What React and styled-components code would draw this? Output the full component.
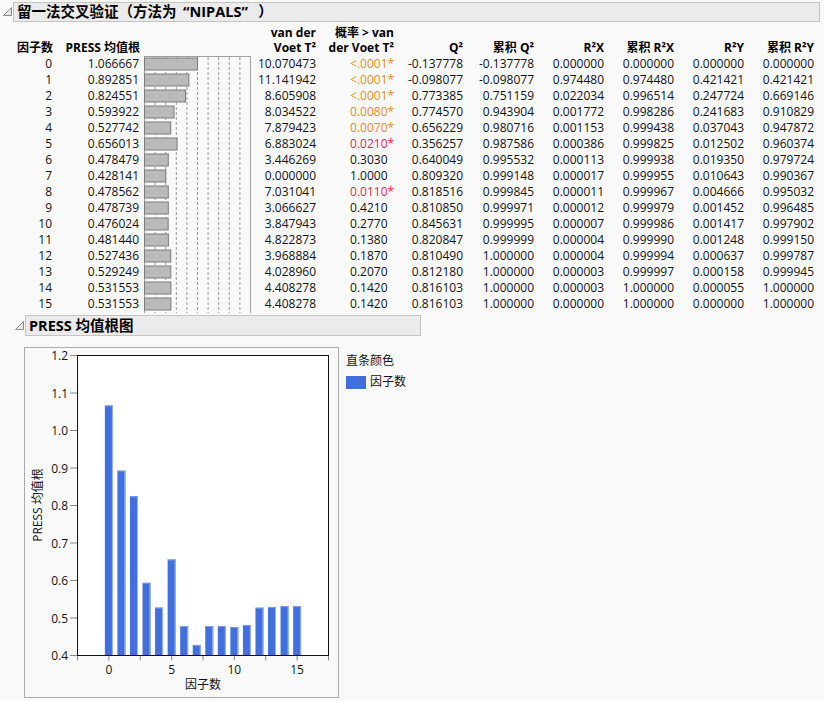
import React from "react";
import styled, { createGlobalStyle } from "styled-components";

const GlobalStyle = createGlobalStyle`
  body {
    margin: 0;
    background: #f9f9f9;
    font-family: "Open Sans", "Noto Sans CJK SC", sans-serif;
    color: #111;
    overflow: hidden;
  }
`;

const rows = [
  [0, 1.066667, "10.070473", "<.0001", "o", "-0.137778", "-0.137778", "0.000000", "0.000000", "0.000000", "0.000000"],
  [1, 0.892851, "11.141942", "<.0001", "o", "-0.098077", "-0.098077", "0.974480", "0.974480", "0.421421", "0.421421"],
  [2, 0.824551, "8.605908", "<.0001", "o", "0.773385", "0.751159", "0.022034", "0.996514", "0.247724", "0.669146"],
  [3, 0.593922, "8.034522", "0.0080", "o", "0.774570", "0.943904", "0.001772", "0.998286", "0.241683", "0.910829"],
  [4, 0.527742, "7.879423", "0.0070", "o", "0.656229", "0.980716", "0.001153", "0.999438", "0.037043", "0.947872"],
  [5, 0.656013, "6.883024", "0.0210", "r", "0.356257", "0.987586", "0.000386", "0.999825", "0.012502", "0.960374"],
  [6, 0.478479, "3.446269", "0.3030", "", "0.640049", "0.995532", "0.000113", "0.999938", "0.019350", "0.979724"],
  [7, 0.428141, "0.000000", "1.0000", "", "0.809320", "0.999148", "0.000017", "0.999955", "0.010643", "0.990367"],
  [8, 0.478562, "7.031041", "0.0110", "r", "0.818516", "0.999845", "0.000011", "0.999967", "0.004666", "0.995032"],
  [9, 0.478739, "3.066627", "0.4210", "", "0.810850", "0.999971", "0.000012", "0.999979", "0.001452", "0.996485"],
  [10, 0.476024, "3.847943", "0.2770", "", "0.845631", "0.999995", "0.000007", "0.999986", "0.001417", "0.997902"],
  [11, 0.48144, "4.822873", "0.1380", "", "0.820847", "0.999999", "0.000004", "0.999990", "0.001248", "0.999150"],
  [12, 0.527436, "3.968884", "0.1870", "", "0.810490", "1.000000", "0.000004", "0.999994", "0.000637", "0.999787"],
  [13, 0.529249, "4.028960", "0.2070", "", "0.812180", "1.000000", "0.000003", "0.999997", "0.000158", "0.999945"],
  [14, 0.531553, "4.408278", "0.1420", "", "0.816103", "1.000000", "0.000003", "1.000000", "0.000055", "1.000000"],
  [15, 0.531553, "4.408278", "0.1420", "", "0.816103", "1.000000", "0.000000", "1.000000", "0.000000", "1.000000"],
];

const pColors = { o: "#f08a1a", r: "#ec1f48", "": "#111" };

const SectionHeader = styled.div`
  display: flex;
  align-items: center;
  gap: 1px;
  padding-left: ${p => p.$indent}px;
  margin-top: ${p => p.$top}px;
`;

const TitleBar = styled.div`
  box-sizing: border-box;
  width: ${p => p.$width}px;
  height: ${p => p.$height}px;
  border: 1px solid #c3c3c3;
  background: #ebebeb;
  padding-left: 3px;
  font-size: 14.5px;
  font-weight: bold;
  line-height: ${p => p.$height - 2}px;
  color: #000;
  white-space: nowrap;
`;

const Quote = styled.span`
  display: inline-block;
  width: 13px;
  text-align: ${p => p.$side};
`;

const Disclosure = ({ left }) => (
  <svg width={left + 9} height="10" style={{ flexShrink: 0 }}>
    <path d={`M${left + 8.5} 0.5 L${left + 8.5} 8.5 L${left + 0.5} 8.5 Z`} fill="#e6e6e6" stroke="#8a8a8a" />
  </svg>
);

const Table = styled.div`
  display: grid;
  grid-template-columns: 53px 87px 110px 66px 78px 69px 71px 70px 70px 70px 70px;
  grid-template-rows: 32px repeat(16, 16px);
  margin-top: 2px;
  font-size: 12px;
`;

const HeadCell = styled.div`
  align-self: end;
  text-align: right;
  font-weight: bold;
  line-height: 15px;
  padding-bottom: 1px;
  white-space: pre-line;
  color: #000;
`;

const Cell = styled.div`
  text-align: right;
  line-height: 16px;
  white-space: nowrap;
  padding-right: ${p => p.$pr || 0}px;
  color: ${p => p.$color || "#111"};
`;

const Star = styled.span`
  display: inline-block;
  width: 6.5px;
  text-align: left;
`;

const MiniWrap = styled.div`
  grid-column: 3;
  grid-row: 2 / span 16;
  align-self: start;
  margin-left: 4px;
  height: 256px;
`;

const MiniChart = () => {
  const step = 10.6;
  return (
    <svg width="107" height="257" style={{ display: "block" }}>
      {Array.from({ length: 9 }, (_, k) => (
        <line key={k} x1={0.5 + step * (k + 1)} x2={0.5 + step * (k + 1)} y1="1" y2="257" stroke="#9a9a9a" strokeDasharray="3 2" />
      ))}
      <line x1="0" x2="107" y1="0.5" y2="0.5" stroke="#a0a0a0" />
      <line x1="106.5" x2="106.5" y1="0" y2="257" stroke="#a0a0a0" />
      <line x1="0.5" x2="0.5" y1="0" y2="257" stroke="#a0a0a0" />
      {rows.map((r, i) => (
        <rect key={i} x="0.5" y={2 + i * 16} width={r[1] * 49.7} height="12" fill="#bababa" stroke="#7c7c7c" />
      ))}
    </svg>
  );
};

const ChartRow = styled.div`
  display: flex;
  align-items: flex-start;
  gap: 7px;
  padding-left: 24px;
  margin-top: 11px;
`;

const ChartFrame = styled.div`
  box-sizing: border-box;
  width: 315px;
  height: 351px;
  border: 1px solid #ababab;
`;

const Legend = styled.div`
  padding-top: 6px;
  font-size: 12px;
  display: flex;
  flex-direction: column;
  gap: 5px;
`;

const LegendTitle = styled.div`
  line-height: 16px;
`;

const LegendItem = styled.div`
  display: flex;
  align-items: center;
  gap: 4px;
  line-height: 16px;
`;

const Swatch = styled.span`
  width: 20px;
  height: 13px;
  background: #4170dd;
`;

const BarChart = () => {
  const left = 52.5, top = 7.5, w = 251, h = 300;
  const ux = w / 20;
  const xs = v => left + (v + 2.5) * ux;
  const ys = v => top + ((1.2 - v) / 0.8) * h;
  const yTicks = [0.4, 0.5, 0.6, 0.7, 0.8, 0.9, 1.0, 1.1, 1.2];
  const xTicks = Array.from({ length: 9 }, (_, k) => -2.5 + k * 2.5);
  return (
    <svg width="313" height="349" style={{ display: "block", overflow: "visible" }} fontFamily='"Open Sans", "Noto Sans CJK SC", sans-serif' fontSize="12">
      <rect x={left} y={top} width={w} height={h} fill="#fff" />
      {yTicks.map(v => (
        <g key={v}>
          <line x1="45" x2={left} y1={ys(v)} y2={ys(v)} stroke="#8a8a8a" />
          <text x="43" y={ys(v) + 4.5} textAnchor="end" fill="#111">
            {v.toFixed(1)}
          </text>
        </g>
      ))}
      {xTicks.map(v => (
        <line key={v} x1={xs(v)} x2={xs(v)} y1={top + h} y2={top + h + 5} stroke="#8a8a8a" />
      ))}
      {[0, 5, 10, 15].map(v => (
        <text key={v} x={xs(v)} y="325.5" textAnchor="middle" fill="#111">
          {v}
        </text>
      ))}
      {rows.map((r, i) => {
        const cx = xs(i);
        const y = ys(r[1]);
        return (
          <g key={i}>
            <rect x={cx - 4} y={y} width="8" height={top + h - y} fill="#4170dd" />
            <line x1={cx + 3.5} x2={cx + 3.5} y1={y} y2={top + h} stroke="#9fb5ee" />
            <line x1={cx - 4} x2={cx + 4} y1={y + 0.5} y2={y + 0.5} stroke="#7d9be6" />
          </g>
        );
      })}
      <rect x={left} y={top} width={w} height={h} fill="none" stroke="#111" />
      <text x={left + w / 2} y="340.5" textAnchor="middle" fill="#111">
        因子数
      </text>
      <text transform="translate(16.5 157) rotate(-90)" textAnchor="middle" fill="#111">
        PRESS 均值根
      </text>
    </svg>
  );
};

const headers = [
  "因子数",
  "PRESS 均值根",
  "",
  "van der\nVoet T²",
  "概率 > van\nder Voet T²",
  "Q²",
  "累积 Q²",
  "R²X",
  "累积 R²X",
  "R²Y",
  "累积 R²Y",
];

export default function App() {
  return (
    <>
      <GlobalStyle />
      <SectionHeader $indent={0} $top={2}>
        <Disclosure left={3} />
        <TitleBar $width={807} $height={20}>
          留一法交叉验证（方法为<Quote $side="right">“</Quote>NIPALS<Quote $side="left">”</Quote> ）
        </TitleBar>
      </SectionHeader>
      <Table>
        {headers.map((t, i) => (
          <HeadCell key={"h" + i}>{t}</HeadCell>
        ))}
        <MiniWrap>
          <MiniChart />
        </MiniWrap>
        {rows.map(r => (
          <React.Fragment key={r[0]}>
            <Cell $pr={1}>{r[0]}</Cell>
            <Cell $pr={1}>{r[1].toFixed(6)}</Cell>
            <Cell>{r[2]}</Cell>
            <Cell $color={pColors[r[4]]}>
              {r[3]}
              <Star>{r[4] ? "*" : ""}</Star>
            </Cell>
            {r.slice(5).map((v, j) => (
              <Cell key={j}>{v}</Cell>
            ))}
          </React.Fragment>
        ))}
      </Table>
      <SectionHeader $indent={15} $top={3}>
        <Disclosure left={0} />
        <TitleBar $width={396} $height={21}>PRESS 均值根图</TitleBar>
      </SectionHeader>
      <ChartRow>
        <ChartFrame>
          <BarChart />
        </ChartFrame>
        <Legend>
          <LegendTitle>直条颜色</LegendTitle>
          <LegendItem>
            <Swatch />
            因子数
          </LegendItem>
        </Legend>
      </ChartRow>
    </>
  );
}
